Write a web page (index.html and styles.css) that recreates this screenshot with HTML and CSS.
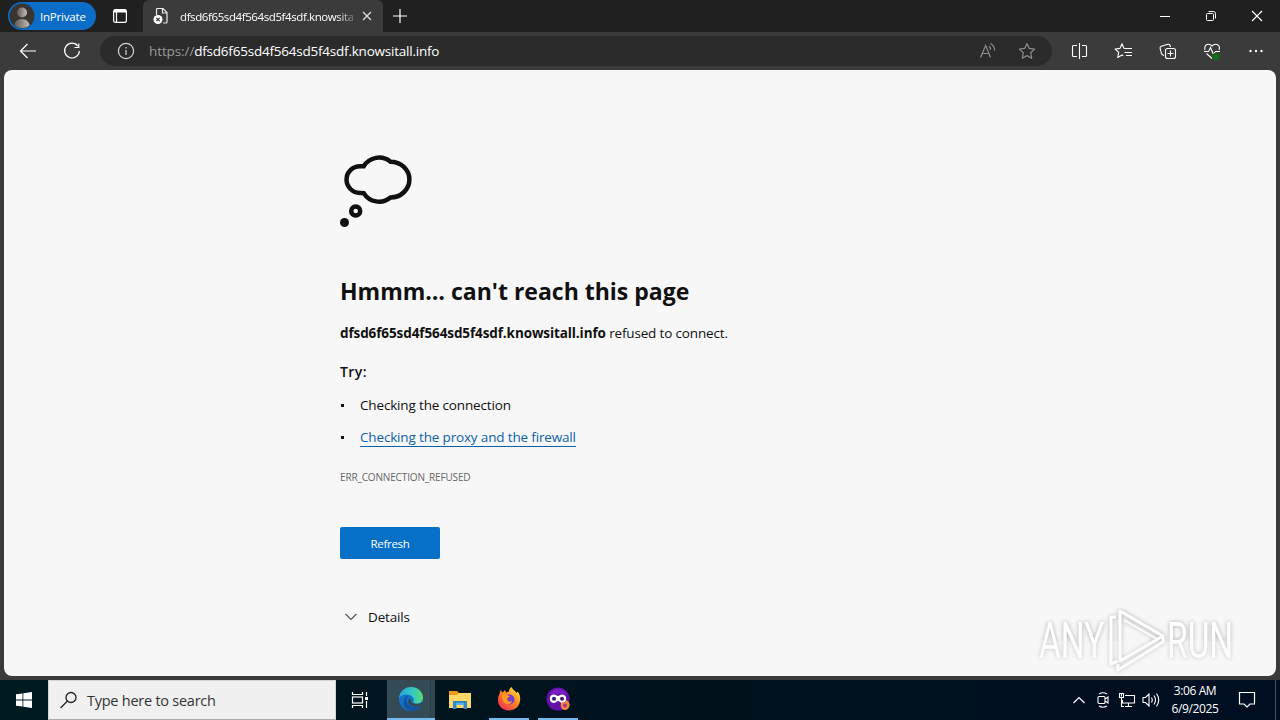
FILE: index.html
```html
<!DOCTYPE html>
<html lang="en">

<head>
    <meta charset="UTF-8">
    <meta name="viewport" content="width=device-width, initial-scale=1.0">
    <title>dfsd6f65sd4f564sd5f4sdf.knowsitall.info</title>
    <link rel="stylesheet" href="styles.css">
</head>

<body>
    <div class="tabstrip">
        <div class="profile">
            <svg class="avatar" width="26" height="26" viewBox="0 0 26 26">
                <defs>
                    <linearGradient id="skin" x1="0" x2="1">
                        <stop offset="0" stop-color="#5f5751" />
                        <stop offset="1" stop-color="#c4bdb8" />
                    </linearGradient>
                    <clipPath id="round"><circle cx="13" cy="13" r="12" /></clipPath>
                </defs>
                <circle cx="13" cy="13" r="12.5" fill="#2d3a45" />
                <g clip-path="url(#round)">
                    <rect width="26" height="26" fill="#3a3532" />
                    <circle cx="13" cy="9.500" r="5" fill="url(#skin)" />
                    <path d="M5 26c0-7 3-10 8-10s8 3 8 10z" fill="url(#skin)" />
                </g>
            </svg>
            <span class="profile-name">InPrivate</span>
        </div>
        <svg class="tab-actions" width="16" height="16" viewBox="0 0 16 16" fill="none" stroke="#fff" stroke-width="1.2">
            <rect x="1.600" y="1.600" width="12.800" height="12.800" rx="2" />
            <path d="M2 3.500h12M2 2.500h12" stroke-width="1.800" />
            <path d="M4.500 4v10" />
        </svg>
        <div class="tab">
            <svg width="16" height="18" viewBox="0 0 16 18" fill="none">
                <path d="M3.500 8V2.500Q3.500 1.500 4.500 1.500H10l4 4V15q0 1-1 1h-3M9.500 1.500v4.500h4.500" stroke="#e8e8e8" stroke-width="1.200" />
                <circle cx="5" cy="12.500" r="4.500" fill="#fff" />
                <path d="M3.300 10.800l3.400 3.400M6.700 10.800l-3.400 3.400" stroke="#333" stroke-width="1.200" />
            </svg>
            <span class="tab-title">dfsd6f65sd4f564sd5f4sdf.knowsitall.info</span>
            <svg class="tab-close" width="10" height="10" viewBox="0 0 10 10" stroke="#e0e0e0" stroke-width="1.200">
                <path d="M1 1l8 8M9 1l-8 8" />
            </svg>
        </div>
        <svg class="new-tab" width="14" height="14" viewBox="0 0 14 14" stroke="#fff" stroke-width="1.200">
            <path d="M7 0v14M0 7h14" />
        </svg>
        <div class="window-buttons">
            <svg width="46" height="32" viewBox="0 0 46 32" stroke="#fff"><path d="M18 16.500h10" /></svg>
            <svg width="46" height="32" viewBox="0 0 46 32" fill="none" stroke="#fff">
                <rect x="18.500" y="13.500" width="7" height="7" rx="1" />
                <path d="M20.500 11.500h5q2 0 2 2v5" />
            </svg>
            <svg width="46" height="32" viewBox="0 0 46 32" stroke="#fff" stroke-width="1.200"><path d="M18 11l10 10M28 11l-10 10" /></svg>
        </div>
    </div>

    <div class="toolbar">
        <svg class="nav" width="44" height="38" viewBox="0 0 44 38" fill="none" stroke="#fff" stroke-width="1.200">
            <path d="M36 19H20.500M27.500 12l-7 7 7 7" />
        </svg>
        <svg class="nav" width="44" height="38" viewBox="0 0 44 38" fill="none" stroke="#fff" stroke-width="1.200">
            <path d="M34 14.200A7.400 7.400 0 1 0 35.400 19M34.800 11.500v4h-4.300" />
        </svg>
        <div class="address">
            <svg width="18" height="18" viewBox="0 0 18 18" fill="none" stroke="#d6d6d6" stroke-width="1.200">
                <circle cx="9" cy="9" r="7.600" />
                <path d="M9 8v5M9 5v1.500" />
            </svg>
            <div class="url"><span class="scheme">https://</span>dfsd6f65sd4f564sd5f4sdf.knowsitall.info</div>
            <svg class="read-aloud" width="18" height="18" viewBox="0 0 18 18" fill="none" stroke="#8d8d8d" stroke-width="1.200">
                <path d="M2.500 15.500L7.700 3.500 12.500 15.500M4.200 11.500h6.800M11 4q1.800 1.500 1.500 4M12.500 1.500q4.300 2.500 4 7" />
            </svg>
            <svg class="star" width="18" height="18" viewBox="0 0 18 18" fill="none" stroke="#8d8d8d" stroke-width="1.200" stroke-linejoin="round">
                <path d="M9 1.500l2.300 4.900 5.300.7-3.900 3.700 1 5.400L9 13.600l-4.700 2.600 1-5.400L1.400 7.100l5.300-.7z" />
            </svg>
        </div>
        <div class="tools">
            <svg width="44" height="38" viewBox="0 0 44 38" fill="none" stroke="#fff" stroke-width="1.100">
                <path d="M21.500 11v16M19 13.500h-3.500q-1 0-1 1v9q0 1 1 1H19M24 13.500h3.500q1 0 1 1v9q0 1-1 1H24" />
            </svg>
            <svg width="44" height="38" viewBox="0 0 44 38" fill="none" stroke="#fff" stroke-width="1.100" stroke-linejoin="round">
                <path d="M24.500 16.700l-2.600-.4L20 11.700l-2 4.700-4.900.6 3.600 3.400-1 5.100 4.300-2.400 1.300.7M24 16.500h6M22.500 20.500H30M24 23.500h6" />
            </svg>
            <svg width="44" height="38" viewBox="0 0 44 38" fill="none" stroke="#fff" stroke-width="1.100">
                <path d="M18 23.500l-1-.4q-1.300-.6-1.600-1.800l-1.300-5q-.3-1.500 1.200-2l6.500-2q1.800-.4 2.300 1.200l.4 1.500" />
                <rect x="19.500" y="16.500" width="10" height="10" rx="2" />
                <path d="M24.500 18.500v6M21.500 21.500h6" />
            </svg>
            <svg width="44" height="38" viewBox="0 0 44 38" fill="none" stroke="#fff" stroke-width="1.100">
                <path d="M15 18q-1-4 2-5.500 3-1 5 1.500 2-2.500 5-1.500 3.500 1.500 2 5.500M16.500 21.500L22 26.500" />
                <path d="M14 19.500h4.500l2-4 3 7 2-3H30" />
                <circle cx="26" cy="24.500" r="3.700" fill="#116b1b" stroke="none" />
            </svg>
            <svg width="44" height="38" viewBox="0 0 44 38" fill="#fff">
                <circle cx="16.500" cy="19" r="1.200" /><circle cx="22" cy="19" r="1.200" /><circle cx="27.500" cy="19" r="1.200" />
            </svg>
        </div>
    </div>

    <div class="page">
        <svg class="cloud" width="72" height="72" viewBox="0 0 72 72" fill="none" stroke="#101010" stroke-width="4.500">
            <path d="M23.700 11.300H20A13.500 13.300 0 0 0 20 37.900L23.700 38.100A18 18 0 0 0 50.500 42.500A18.900 17.900 0 1 0 50.500 6.700A18 18 0 0 0 23.700 11.300z" />
            <circle cx="15.700" cy="56" r="4.500" />
            <circle cx="4.500" cy="67.500" r="4.500" fill="#101010" stroke="none" />
        </svg>
        <h1 class="heading">Hmmm… can't reach this page</h1>
        <p class="reason"><strong>dfsd6f65sd4f564sd5f4sdf.knowsitall.info</strong> refused to connect.</p>
        <p class="try">Try:</p>
        <ul class="suggestions">
            <li><span class="check">Checking the connection</span></li>
            <li><a class="check link" href="#">Checking the proxy and the firewall</a></li>
        </ul>
        <div class="error-code">ERR_CONNECTION_REFUSED</div>
        <button class="refresh">Refresh</button>
        <div class="details">
            <svg width="12" height="8" viewBox="0 0 12 8" fill="none" stroke="#555" stroke-width="1.200"><path d="M.5 1L6 6.500 11.500 1" /></svg>
            <span>Details</span>
        </div>

        <div class="watermark">
            <span class="any">ANY</span>
            <svg width="60" height="66" viewBox="0 0 60 66" fill="none" stroke="#fff" stroke-width="3" stroke-linejoin="round">
                <path d="M10 9H5v47l7-3" />
                <path d="M14 3l43 25-43 25z" />
                <path d="M18 12l33 19" stroke-width="2" />
                <path d="M12 56v6l45-28v-5" />
            </svg>
            <span class="run">RUN</span>
        </div>
    </div>

    <div class="taskbar">
        <div class="start">
            <svg width="16" height="16" viewBox="0 0 16 16" fill="#fff">
                <path d="M0 2.300l6.500-.9v6.200H0zM7.300 1.300L16 0v7.600H7.300zM0 8.400h6.500v6.200L0 13.700zM7.300 8.400H16V16l-8.700-1.300z" />
            </svg>
        </div>
        <div class="search">
            <svg width="18" height="18" viewBox="0 0 18 18" fill="none" stroke="#222" stroke-width="1.300">
                <circle cx="11" cy="6.500" r="5" /><path d="M7.500 10L.5 17" />
            </svg>
            <span>Type here to search</span>
        </div>
        <div class="task">
            <svg width="18" height="18" viewBox="0 0 18 18" fill="none" stroke="#fff" stroke-width="1.200">
                <path d="M1.500 1v2.500h10V1M1.500 17v-2.500h10V17M15.500 1v4M15.500 10v7" />
                <rect x="1.500" y="6" width="10" height="6" />
                <rect x="14" y="6" width="3" height="3" fill="#fff" stroke="none" />
            </svg>
        </div>
        <div class="task active">
            <svg width="24" height="24" viewBox="0 0 24 24">
                <defs>
                    <linearGradient id="edgeTop" x1="0" x2="1">
                        <stop offset="0" stop-color="#2ba5df" />
                        <stop offset=".6" stop-color="#35c9bd" />
                        <stop offset="1" stop-color="#5edb70" />
                    </linearGradient>
                </defs>
                <circle cx="12" cy="12" r="12" fill="#1273c8" />
                <path d="M0 11C1 4 6 0 12 0c7 0 12 5 12 10.500 0 4-3 6-6.500 6-3 0-4-1.200-3-2.500C16 12 13 7.500 7.500 7.500 4 7.500 1.500 9 0 11z" fill="url(#edgeTop)" />
                <path d="M7.500 13c0-3 2-4.500 4.500-4.500-4-.5-8 3-7.500 8C5 21 9 24 13 24c4.500 0 7.500-2.500 9.500-6-6 3.500-15 1.500-15-5z" fill="#1254a1" />
                <path d="M11.800 11.500c-1 5 5.500 7.500 12.200 3.500l-1.500 3.400C17 21.500 9 19 9.200 14c0-1.500 1-2.500 2.600-2.500z" fill="#344955" />
            </svg>
        </div>
        <div class="task">
            <svg width="22" height="20" viewBox="0 0 22 20">
                <path d="M0 1h8l2 2h11v4H0z" fill="#e99b16" />
                <path d="M0 5h8l2-2h12v15H0z" fill="#ffd768" />
                <path d="M4 11h14v8h-3.500v-4h-7v4H4z" fill="#3389c9" />
                <path d="M7 13h8v2H7z" fill="#56b6ed" />
            </svg>
        </div>
        <div class="task running">
            <svg width="24" height="24" viewBox="0 0 24 24">
                <defs>
                    <linearGradient id="fox" x1="1" y1="0" x2=".2" y2="1">
                        <stop offset="0" stop-color="#fff14b" />
                        <stop offset=".5" stop-color="#ff8a1e" />
                        <stop offset="1" stop-color="#f12b5b" />
                    </linearGradient>
                </defs>
                <path d="M2.500 7l1-4 2 2.500L8 3l1 2.500 3-1c0-2 1-3.500 2.500-4.500 1 3 4 3.500 5 6l1-1.500C23 7 23.500 10 23 14c-1 6-5.500 9.500-11 9.500C5.500 23.500 1 19 1 13c0-2.500.5-4.500 1.500-6z" fill="url(#fox)" />
                <circle cx="12.500" cy="12.500" r="5" fill="#7b3bd0" />
                <path d="M5 7l5 1 3 1.500-3 2 1 2.500c2 1 3 .5 4-.5 0 3-3 4.500-5.500 3.500C6 16 4.500 11 5 7z" fill="#ff9b1c" />
            </svg>
        </div>
        <div class="task running">
            <svg width="24" height="24" viewBox="0 0 24 24">
                <circle cx="12" cy="12" r="11.500" fill="#6411aa" />
                <path d="M3 7Q12-3 21 7z" fill="#7b1bc3" />
                <path d="M7.500 7.500c2 0 3.500 1.500 4.500 1.500s2.500-1.500 4.500-1.500a4.300 4.300 0 0 1 0 8.500c-2.500 0-3-2-4.500-2S10 16 7.500 16a4.300 4.300 0 0 1 0-8.500z" fill="#fff" />
                <circle cx="8" cy="11.800" r="2" fill="#421070" /><circle cx="16" cy="11.800" r="2" fill="#421070" />
                <path d="M15 16l2-1.500 1 1.500 2.500-3c3 2 3.500 4 3 6-.6 2.500-2.500 4-4.500 4-3 0-5-3-4-7z" fill="#f28639" />
                <circle cx="19" cy="18.500" r="2" fill="#a4398c" />
            </svg>
        </div>
        <div class="tray">
            <svg width="12" height="16" viewBox="0 0 12 16" fill="none" stroke="#fff" stroke-width="1.200"><path d="M.5 11L6 5.500l5.500 5.500" /></svg>
            <svg class="meet" width="12" height="16" viewBox="0 0 12 16" fill="none" stroke="#fff" stroke-width="1.100">
                <rect x="1" y="4.500" width="7" height="7" rx="1" /><path d="M8 7l3-2v6L8 9M2 2q4-2.500 8 0M2 14q4 2.500 8 0" />
            </svg>
            <svg class="network" width="18" height="16" viewBox="0 0 18 16" fill="none" stroke="#fff" stroke-width="1.100">
                <path d="M7 3.500h9.500v7.500H4.500V8M10.500 11v3.500M7 14.500h7M3.500 6v8.500H6" /><rect x="1.500" y="1.500" width="4" height="4" /><path d="M3.500 1.500v3" />
            </svg>
            <svg class="volume" width="18" height="16" viewBox="0 0 18 16" fill="none" stroke="#fff" stroke-width="1.100">
                <path d="M1 5.500h2.500L7 2v12l-3.500-3.500H1zM9.500 5.500q1.500 2.500 0 5M12 3.500q3 4.500 0 9M14.500 1.500q4.500 6.500 0 13" />
            </svg>
            <div class="clock">
                <div>3:06 AM</div>
                <div>6/9/2025</div>
            </div>
            <svg class="notify" width="18" height="18" viewBox="0 0 18 18" fill="none" stroke="#fff" stroke-width="1.200">
                <path d="M1.500 1.500h15v11.500H12l-3 3-3-3H1.500z" />
            </svg>
            <div class="show-desktop"></div>
        </div>
    </div>
</body>

</html>
```
FILE: styles.css
```css
* {
    box-sizing: border-box;
    margin: 0;
    padding: 0;
}

body {
    width: 1280px;
    height: 720px;
    overflow: hidden;
    background: #3b3b3b;
    font-family: "Open Sans", "Noto Sans", sans-serif;
    color: #101010;
}

svg {
    display: block;
    flex: none;
}

.tabstrip {
    display: flex;
    align-items: center;
    height: 32px;
    padding-left: 8px;
    background: #202020;
}

.profile {
    display: flex;
    align-items: center;
    width: 88px;
    height: 28px;
    padding-left: 1px;
    border-radius: 14px;
    background: #0b6dc7;
}

.profile-name {
    margin-left: 5px;
    color: #fff;
    font-size: 11.5px;
    letter-spacing: -0.2px;
}

.tab-actions {
    margin-left: 16px;
}

.tab {
    display: flex;
    align-items: center;
    width: 240px;
    height: 32px;
    margin-left: 15px;
    padding-left: 10px;
    background: #3b3b3b;
    border-radius: 6px 6px 0 0;
}

.tab-title {
    width: 173px;
    margin-left: 11px;
    overflow: hidden;
    white-space: nowrap;
    font-size: 11.5px;
    letter-spacing: -0.4px;
    color: #fff;
    -webkit-mask-image: linear-gradient(90deg, #000 90%, rgba(0, 0, 0, 0.3));
    mask-image: linear-gradient(90deg, #000 90%, rgba(0, 0, 0, 0.3));
}

.tab-close {
    margin-left: 9px;
}

.new-tab {
    margin-left: 10px;
}

.window-buttons {
    display: flex;
    margin-left: auto;
}

.toolbar {
    display: flex;
    align-items: center;
    height: 38px;
    background: #3b3b3b;
}

.address {
    display: flex;
    align-items: center;
    width: 952px;
    height: 30px;
    margin-left: 12px;
    padding-left: 17px;
    border-radius: 15px;
    background: #2b2b2b;
}

.url {
    margin-left: 14px;
    font-size: 13.5px;
    letter-spacing: -0.22px;
    color: #fff;
    white-space: nowrap;
}

.scheme {
    color: #9a9a9a;
    letter-spacing: -0.1px;
}

.read-aloud {
    margin-left: auto;
}

.star {
    margin: 0 16px 0 22px;
}

.tools {
    display: flex;
    margin-left: 6px;
}

.page {
    position: relative;
    width: 1272px;
    height: 606px;
    margin: 0 4px;
    padding: 85px 0 0 336px;
    border-radius: 8px;
    background: #f7f7f7;
    font-size: 13.5px;
    line-height: 20px;
    letter-spacing: -0.16px;
}

.cloud {
    overflow: visible;
}

.heading {
    margin-top: 48px;
    font-size: 23px;
    line-height: 32px;
    font-weight: 700;
    letter-spacing: 0;
    white-space: nowrap;
}

.reason {
    margin-top: 16px;
    white-space: nowrap;
}

.reason strong {
    letter-spacing: -0.1px;
}

.try {
    margin-top: 19px;
    font-size: 14px;
    font-weight: 600;
    letter-spacing: 0.4px;
}

.suggestions {
    margin-top: 13px;
    list-style: none;
}

.suggestions li {
    display: flex;
    align-items: center;
    height: 20px;
    margin-bottom: 12px;
}

.suggestions li::before {
    content: "";
    width: 3px;
    height: 3px;
    margin: 0 16px 0 1px;
    background: #101010;
}

.link {
    color: #0b62ab;
    text-decoration: none;
    line-height: 18px;
    border-bottom: 1px solid #0b62ab;
}

.error-code {
    margin-top: 22px;
    font-size: 10px;
    line-height: 16px;
    letter-spacing: -0.15px;
    color: #666;
}

.refresh {
    display: block;
    width: 100px;
    height: 32px;
    margin-top: 42px;
    border: none;
    border-radius: 2px;
    background: #0670c8;
    color: #fff;
    font-family: inherit;
    font-size: 11.5px;
    letter-spacing: -0.3px;
}

.details {
    display: flex;
    align-items: center;
    margin-top: 48px;
    padding-left: 5px;
    gap: 11px;
}

/* logo lies over the lower right corner of the page */
.watermark {
    position: absolute;
    left: 1032px;
    top: 538px;
    display: flex;
    align-items: center;
    width: 204px;
    padding-left: 3px;
    color: #fff;
    letter-spacing: 0;
    filter: drop-shadow(0 0 2px rgba(0, 0, 0, 0.3));
    -webkit-mask-image: linear-gradient(#000 50%, rgba(0, 0, 0, 0.65) 50%);
    mask-image: linear-gradient(#000 50%, rgba(0, 0, 0, 0.65) 50%);
}

.any,
.run {
    flex: none;
    width: 67px;
    font-family: Roboto, sans-serif;
    font-size: 50px;
    line-height: 66px;
    transform: scaleX(0.67);
    transform-origin: left;
}

.run {
    margin-left: 1px;
}

.taskbar {
    display: flex;
    height: 40px;
    margin-top: 4px;
    background: linear-gradient(90deg, #001a22, #00101c 60%, #000e22);
}

.start,
.task {
    display: flex;
    align-items: center;
    justify-content: center;
    width: 48px;
    height: 40px;
}

.search {
    display: flex;
    align-items: center;
    width: 288px;
    height: 40px;
    padding-left: 11px;
    gap: 9px;
    border: 1px solid #d4d4d4;
    border-bottom-color: #aaa;
    background: #f0f0f0;
    color: #333;
    font-size: 14.5px;
    letter-spacing: -0.25px;
    white-space: nowrap;
}

.task {
    margin-right: 1px;
}

.task.active {
    margin-left: 2px;
    background: linear-gradient(90deg, #344b56 43px, #25404b 43px, #25404b 44px, #304650 44px);
    border-bottom: 2px solid #76b9ed;
}

.task.running {
    width: 40px;
    margin: 0 5px 0 4px;
    border-bottom: 2px solid #76b9ed;
}

.tray {
    display: flex;
    align-items: center;
    margin-left: auto;
}

.meet {
    margin-left: 12px;
}

.network {
    margin-left: 9px;
}

.volume {
    margin-left: 6px;
}

.clock {
    width: 60px;
    margin-left: 5px;
    color: #fff;
    font-size: 12px;
    line-height: 18px;
    text-align: center;
    letter-spacing: -0.4px;
}

.notify {
    margin-left: 13px;
}

.show-desktop {
    width: 5px;
    height: 40px;
    margin-left: 19px;
    border-left: 1px solid #47525e;
}
```
